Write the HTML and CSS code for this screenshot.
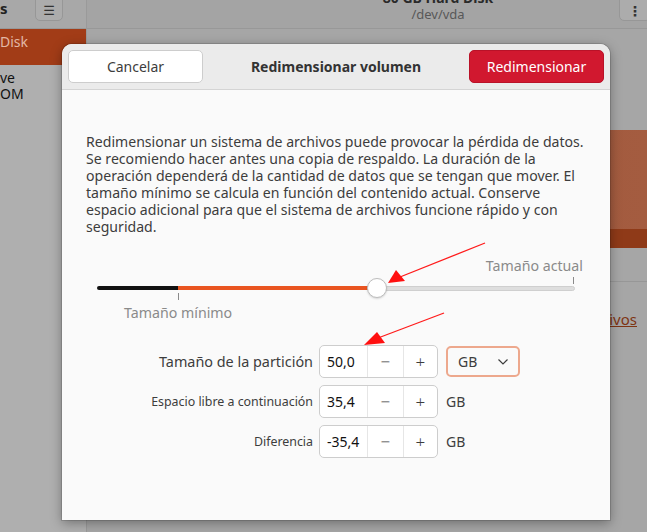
FILE: index.html
```html
<!DOCTYPE html>
<html lang="es">
<head>
<meta charset="utf-8">
<title>Redimensionar volumen</title>
<link rel="stylesheet" href="styles.css">
</head>
<body>
<div class="app">
  <aside class="sidebar">
    <div class="side-head">
      <span class="side-title">s</span>
      <span class="icon-btn menu-btn">☰</span>
    </div>
    <div class="side-item selected">Disk</div>
    <div class="side-item two"><span>ve</span><span>OM</span></div>
  </aside>
  <main class="main">
    <header class="main-head">
      <div class="head-titles">
        <span class="head-title">80 GB Hard Disk</span>
        <span class="head-sub">/dev/vda</span>
      </div>
      <span class="icon-btn more-btn">⋮</span>
    </header>
    <div class="main-body">
      <div class="volumes"><div class="vol-bottom"></div></div>
      <div class="sep"></div>
      <div class="link-row"><a class="link">Sistema de archivos</a></div>
    </div>
  </main>
</div>

<div class="dialog">
  <div class="dlg-head">
    <button class="btn btn-cancel">Cancelar</button>
    <span class="dlg-title">Redimensionar volumen</span>
    <button class="btn btn-danger">Redimensionar</button>
  </div>
  <div class="dlg-body">
    <p class="desc">Redimensionar un sistema de archivos puede provocar la pérdida de datos.<br>Se recomiendo hacer antes una copia de respaldo. La duración de la<br>operación dependerá de la cantidad de datos que se tengan que mover. El<br>tamaño mínimo se calcula en función del contenido actual. Conserve<br>espacio adicional para que el sistema de archivos funcione rápido y con<br>seguridad.</p>

    <div class="slider">
      <div class="mark-top"><span class="mark-label">Tamaño actual</span><span class="tick"></span></div>
      <div class="track">
        <span class="seg seg-min"></span>
        <span class="seg seg-fill"></span>
        <span class="knob"></span>
        <span class="seg seg-rest"></span>
      </div>
      <div class="mark-bottom"><span class="tick"></span><span class="mark-label">Tamaño mínimo</span></div>
    </div>

    <div class="form">
      <label class="lbl lbl-big">Tamaño de la partición</label>
      <div class="spin"><span class="spin-val">50,0</span><span class="spin-b">−</span><span class="spin-b">+</span></div>
      <div class="combo"><span>GB</span><svg width="12" height="8" viewBox="0 0 12 8"><path d="M1.5 1.5 L6 6 L10.5 1.5" fill="none" stroke="#3d3d3d" stroke-width="1.2"/></svg></div>

      <label class="lbl">Espacio libre a continuación</label>
      <div class="spin"><span class="spin-val">35,4</span><span class="spin-b">−</span><span class="spin-b">+</span></div>
      <span class="unit">GB</span>

      <label class="lbl">Diferencia</label>
      <div class="spin"><span class="spin-val">-35,4</span><span class="spin-b">−</span><span class="spin-b">+</span></div>
      <span class="unit">GB</span>
    </div>
  </div>
</div>

<svg class="arrows" width="647" height="532" viewBox="0 0 647 532">
  <line x1="485" y1="243" x2="400" y2="277" stroke="#ff1a1a" stroke-width="1.3"/>
  <polygon points="388,283 396,270 405,281" fill="#ff1010"/>
  <line x1="444" y1="313" x2="378" y2="338" stroke="#ff1a1a" stroke-width="1.3"/>
  <polygon points="364,345 377,332 385,343" fill="#ff1010"/>
</svg>
</body>
</html>
```
FILE: styles.css
```css
* { box-sizing: border-box; }
html, body { margin: 0; padding: 0; }
body {
  width: 647px;
  height: 532px;
  overflow: hidden;
  position: relative;
  font-family: "Noto Sans", "DejaVu Sans", sans-serif;
  background: #a6a6a6;
  color: #3d3d3d;
}
.app {
  display: grid;
  grid-template-columns: 87px 1fr;
  height: 532px;
}
.sidebar {
  background: #afafaf;
  border-right: 1px solid #9a9a9a;
}
.side-head {
  height: 29px;
  display: flex;
  align-items: flex-start;
  justify-content: space-between;
  padding: 0 23px 0 0;
  border-bottom: 1px solid #989898;
  background: #a8a8a8;
}
.side-title {
  font-weight: bold;
  font-size: 15px;
  margin-top: -2px;
  color: #222;
}
.icon-btn {
  display: flex;
  align-items: center;
  justify-content: center;
  width: 28px;
  height: 26px;
  margin-top: -5px;
  border: 1px solid #979797;
  border-radius: 5px;
  background: #acacac;
  font-size: 13px;
  color: #333;
  padding-top: 4px;
}
.side-item {
  font-size: 14px;
  color: #111;
}
.side-item.selected {
  background: #a23c17;
  color: #e2b8a5;
  height: 36px;
  padding-top: 3px;
}
.side-item.two {
  display: flex;
  flex-direction: column;
  line-height: 16px;
  padding-top: 5px;
}
.main {
  display: flex;
  flex-direction: column;
}
.main-head {
  height: 29px;
  border-bottom: 1px solid #989898;
  background: #a4a4a4;
  display: flex;
  justify-content: space-between;
  align-items: flex-start;
}
.head-titles {
  flex: 1;
  display: flex;
  flex-direction: column;
  align-items: center;
  margin-top: -10px;
  padding-left: 170px;
}
.head-title {
  font-weight: bold;
  font-size: 14px;
  color: #2a2a2a;
  line-height: 16px;
}
.head-sub {
  font-size: 13px;
  color: #585858;
  line-height: 16px;
}
.more-btn {
  margin-right: -4px;
  width: 32px;
  font-size: 14px;
  font-weight: bold;
}
.main-body {
  flex: 1;
  padding-top: 101px;
}
.volumes {
  height: 118px;
  background: linear-gradient(90deg, #9a5033 0%, #a45c40 100%);
  display: flex;
  flex-direction: column;
  justify-content: flex-end;
}
.vol-bottom {
  height: 19px;
  background: #8f3a18;
}
.sep {
  margin-top: 33px;
  border-top: 1px solid #979797;
}
.link-row {
  display: flex;
  justify-content: flex-end;
  padding-right: 10px;
  margin-top: 27px;
}
.link {
  font-size: 15px;
  color: #7e3413;
  text-decoration: underline;
  white-space: nowrap;
}

/* Dialog */
.dialog {
  position: absolute;
  left: 62px;
  top: 44px;
  width: 548px;
  height: 476px;
  background: #fafafa;
  border-radius: 10px 10px 0 0;
  box-shadow: 0 3px 12px rgba(0,0,0,0.35), 0 0 0 1px rgba(0,0,0,0.12);
  overflow: hidden;
}
.dlg-head {
  height: 46px;
  background: #ebebeb;
  border-bottom: 1px solid #d4d4d4;
  display: flex;
  align-items: center;
  justify-content: space-between;
  padding: 0 6px;
}
.btn {
  width: 135px;
  height: 33px;
  border-radius: 5px;
  font-family: inherit;
  font-size: 14px;
  padding: 0;
}
.btn-cancel {
  background: #ffffff;
  border: 1px solid #cdcdcd;
  color: #3d3d3d;
}
.btn-danger {
  background: #d1182f;
  border: 1px solid #b91228;
  color: #ffffff;
}
.dlg-title {
  font-weight: bold;
  font-size: 14px;
  color: #333;
}
.dlg-body {
  padding: 43px 24px 0 24px;
}
.desc {
  margin: 0 -10px 0 0;
  font-size: 14.1px;
  line-height: 17px;
  color: #3d3d3d;
}

/* Slider */
.slider {
  margin: 22px 11px 0 11px;
  color: #8a8a8a;
  font-size: 14.2px;
}
.mark-top {
  display: flex;
  flex-direction: column;
  align-items: flex-end;
}
.mark-top .mark-label {
  line-height: 17px;
  margin-right: -8px;
}
.tick {
  display: block;
  width: 1px;
  height: 7px;
  background: #8a8a8a;
}
.mark-top .tick { margin-top: 3px; margin-right: 1px; }
.track {
  display: flex;
  align-items: center;
  height: 8px;
}
.seg { height: 4px; display: block; }
.seg-min { width: 81px; background: #111; border-radius: 2px 0 0 2px; }
.seg-fill { width: 199px; background: #e95420; }
.seg-rest { flex: 1; background: #dedede; border: 1px solid #cfcfcf; border-radius: 0 3px 3px 0; height: 5px; }
.knob {
  width: 20px;
  height: 20px;
  margin: -6px -10px;
  border-radius: 50%;
  background: #ffffff;
  border: 1px solid #bdbdbd;
  box-shadow: 0 1px 2px rgba(0,0,0,0.15);
  position: relative;
  z-index: 1;
}
.mark-bottom {
  display: flex;
  flex-direction: column;
  align-items: flex-start;
  padding-left: 81px;
}
.mark-bottom .tick { margin-top: 1px; }
.mark-bottom .mark-label { margin-left: -54px; margin-top: 4px; line-height: 17px; }

/* Form */
.form {
  margin-top: 24px;
  display: grid;
  grid-template-columns: 227px 119px auto;
  column-gap: 6px;
  row-gap: 7px;
  align-items: center;
  justify-content: start;
}
.lbl {
  text-align: right;
  font-size: 12.4px;
  color: #3d3d3d;
  white-space: nowrap;
}
.lbl-big { font-size: 14.4px; }
.spin {
  display: flex;
  height: 33px;
  border: 1px solid #cdcdcd;
  border-radius: 5px;
  background: #ffffff;
  overflow: hidden;
}
.spin-val {
  width: 49px;
  display: flex;
  align-items: center;
  padding-left: 7px;
  font-size: 14px;
  color: #111;
  border-right: 1px solid #e6e6e6;
}
.spin-b {
  width: 35px;
  display: flex;
  align-items: center;
  justify-content: center;
  font-size: 17px;
  color: #3d3d3d;
  font-weight: 300;
}
.spin-b + .spin-b { border-left: 1px solid #e6e6e6; }
.combo {
  margin-left: 2px;
  width: 74px;
  height: 31px;
  border: 2px solid #eda88d;
  border-radius: 5px;
  display: flex;
  align-items: center;
  justify-content: space-between;
  padding: 0 9px 0 10px;
  font-size: 14px;
  color: #3d3d3d;
}
.unit {
  margin-left: 2px;
  font-size: 14px;
  color: #3d3d3d;
}

.arrows {
  position: absolute;
  left: 0;
  top: 0;
  pointer-events: none;
}
```
